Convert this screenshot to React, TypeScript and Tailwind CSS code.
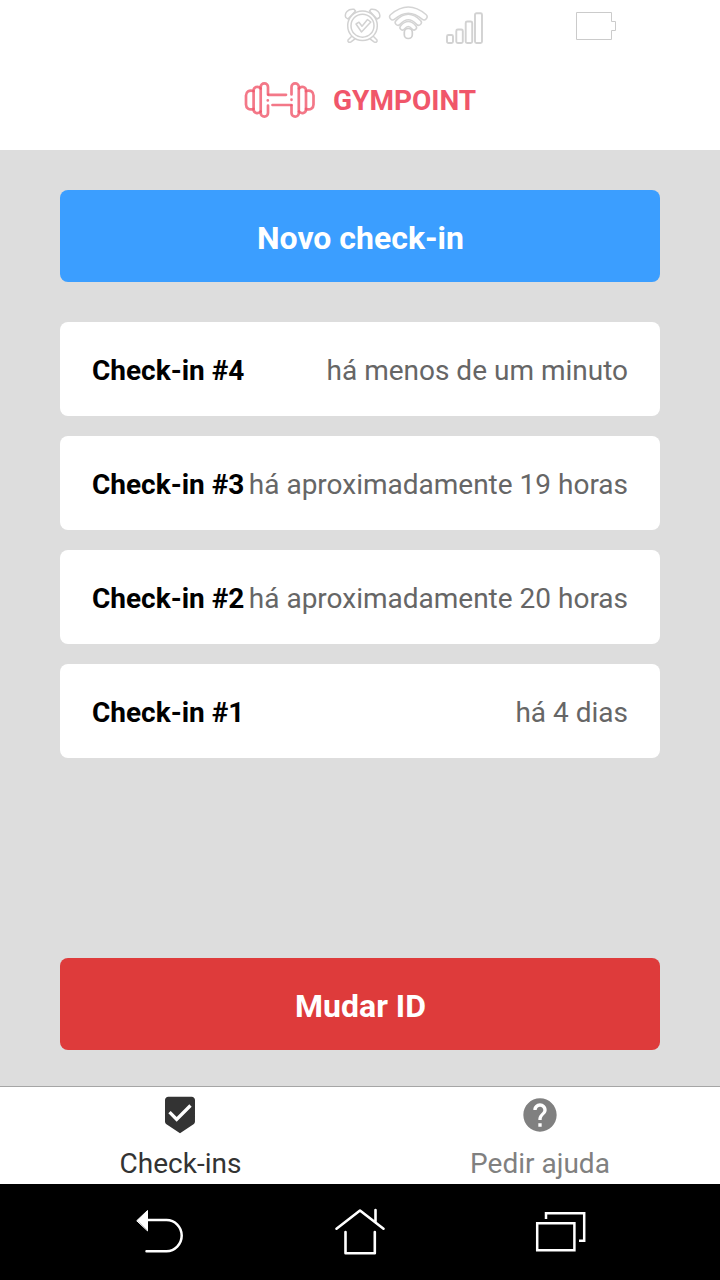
import React from 'react';
import { MdBeenhere, MdHelp } from 'react-icons/md';

const checkins = [
  { id: 4, when: 'há menos de um minuto' },
  { id: 3, when: 'há aproximadamente 19 horas' },
  { id: 2, when: 'há aproximadamente 20 horas' },
  { id: 1, when: 'há 4 dias' },
];

function AlarmIcon() {
  return (
    <svg width="37" height="37" viewBox="0 0 37 37" fill="none" stroke="#d2d2d2" strokeWidth="1.5" strokeLinecap="round" strokeLinejoin="round">
      <path d="M1.8 10.5C0 6 4 1.500 10 2.300L11.500 4 4 12zM35.500 10.500C37 6 33 1.500 27 2.300L25.500 4 33 12z" />
      <path d="M8 29l-4 4c-.5 2 1 3 3 1.800l4-3M29 29l4 4c.5 2-1 3-3 1.800l-4-3" />
      <circle cx="18.500" cy="18.700" r="14.800" fill="white" />
      <circle cx="18.500" cy="18.700" r="11.500" />
      <path d="M12 17l3-1.800 3 4 5.500-6.700 3.300 2.500-9.300 10z" />
    </svg>
  );
}

function WifiIcon() {
  return (
    <svg width="40" height="35" viewBox="0 0 40 35" fill="none" strokeLinecap="round">
      <path d="M4.700 10.800Q20.300-2.500 36 10.800" stroke="#d4d4d4" strokeWidth="7.500" />
      <path d="M4.700 10.800Q20.300-2.500 36 10.800" stroke="white" strokeWidth="4.500" />
      <path d="M10 16.500Q20.300 5.500 30.600 16.500" stroke="#d4d4d4" strokeWidth="7" />
      <path d="M10 16.500Q20.300 5.500 30.600 16.500" stroke="white" strokeWidth="4" />
      <path d="M14.500 21.500Q20.300 14.500 26 21.500" stroke="#d4d4d4" strokeWidth="6.500" />
      <path d="M14.500 21.500Q20.300 14.500 26 21.500" stroke="white" strokeWidth="3.500" />
      <rect x="16.300" y="22.500" width="8" height="10" rx="3.800" fill="white" stroke="#d0d0d0" strokeWidth="1.700" />
    </svg>
  );
}

function SignalIcon() {
  return (
    <svg width="38" height="33" viewBox="0 0 38 33" fill="none" stroke="#d2d2d2" strokeWidth="1.900">
      <rect x="1" y="23" width="6" height="8" rx="1.500" />
      <rect x="10.300" y="17.500" width="6.500" height="13.500" rx="1.500" />
      <rect x="19.700" y="9.500" width="6.500" height="21.500" rx="1.500" />
      <rect x="29" y="1.300" width="7" height="29.700" rx="1.500" />
    </svg>
  );
}

function Dumbbell() {
  return (
    <svg width="72" height="38" viewBox="0 0 72 38" fill="none" stroke="#f0566a" strokeOpacity=".8" strokeWidth="2.700" strokeLinecap="round">
      <path d="M9.500 10C5 8.500 2 11 2 14.500v9C2 27 5 29.500 9.500 28" />
      <path d="M16.600 7.500c-2.500-3-7-1.500-7 2v19c0 3.500 4.500 5 7 2" />
      <path d="M24 13.500V6a3.650 3.650 0 0 0-7.300 0v26a3.650 3.650 0 0 0 7.300 0v-7.500" />
      <path d="M24.500 13.800H42M28.500 24H47.500M23.800 19.300v.1M47.500 18.700v.1" />
      <path d="M47.500 13.500V6a3.650 3.650 0 0 1 7.300 0v26a3.650 3.650 0 0 1-7.300 0v-7.500" />
      <path d="M55 7.500c2.500-3 7-1.500 7 2v19c0 3.500-4.500 5-7 2" />
      <path d="M62 10c4.500-1.500 7.500 1 7.500 4.500v9c0 3.500-3 6-7.500 4.500" />
    </svg>
  );
}

export default function App() {
  return (
    <div className="flex h-[1280px] w-[720px] flex-col overflow-hidden bg-[#dddddd] font-['Roboto',sans-serif]">
      <div className="flex h-[50px] shrink-0 items-start bg-white pl-[344px]">
        <div className="pt-[7px]"><AlarmIcon /></div>
        <div className="pl-[7px] pt-[6px]"><WifiIcon /></div>
        <div className="pl-[18px] pt-[12px]"><SignalIcon /></div>
        <div className="pl-[92px] pt-[11px]">
          <svg width="41" height="30" viewBox="0 0 41 30" fill="none" stroke="#cbcbcb">
            <path d="M.5 1.500h35v9h4v9h-4v9H.5z" />
          </svg>
        </div>
      </div>
      <header className="flex h-[100px] shrink-0 items-center justify-start bg-white pl-[244px]">
        <Dumbbell />
        <span className="ml-[17px] pt-[2px] text-[28px] leading-[38px] font-bold text-[#f0566a]">GYMPOINT</span>
      </header>

      <main className="flex grow flex-col px-[60px] pt-[40px] pb-[36px]">
        <button className="flex h-[92px] shrink-0 items-center justify-center rounded-lg bg-[#3b9eff] pt-[4px] pl-px text-[32px] font-bold text-white">
          Novo check-in
        </button>
        <ul className="mt-[40px] flex flex-col gap-[20px]">
          {checkins.map((c) => (
            <li key={c.id} className="flex h-[94px] items-center justify-between rounded-lg bg-white px-[32px] pt-[4px] text-[28px] whitespace-nowrap">
              <strong className="font-bold text-black">Check-in #{c.id}</strong>
              <span className="text-[#666666]">{c.when}</span>
            </li>
          ))}
        </ul>
        <button className="mt-auto flex h-[92px] shrink-0 items-center justify-center rounded-lg bg-[#de3b3b] pt-[4px] pl-px text-[32px] font-bold text-white">
          Mudar ID
        </button>
      </main>

      <nav className="flex h-[98px] shrink-0 border-t border-[#a5a5a5] bg-white text-[28px]">
        <div className="flex w-1/2 flex-col items-center pt-[8px] text-[#333333]">
          <MdBeenhere size={40} />
          <span className="mt-[9px] pl-px leading-[40px]">Check-ins</span>
        </div>
        <div className="flex w-1/2 flex-col items-center pt-[8px] text-[#808080]">
          <MdHelp size={40} />
          <span className="mt-[9px] leading-[40px]">Pedir ajuda</span>
        </div>
      </nav>

      <div className="flex h-[96px] shrink-0 items-center bg-black">
        <div className="flex w-[200px] pl-[130px]">
          <svg width="60" height="60" viewBox="130 1202 60 60" fill="none" stroke="white" strokeWidth="2.500" strokeLinecap="round">
            <path d="M147 1220h19.500a15.200 15.600 0 0 1 0 31.200h-20" />
            <path d="M137 1220.500l10.500-10v20z" fill="white" stroke="white" strokeWidth="1" strokeLinejoin="round" />
          </svg>
        </div>
        <div className="flex w-[320px] justify-center">
          <svg width="60" height="60" viewBox="330 1202 60 60" fill="none" stroke="white" strokeWidth="2.600" strokeLinecap="round" strokeLinejoin="round">
            <path d="M336.500 1228.700L360 1210.500l23.500 18.200M375.500 1210v12M345.500 1232v21.200h29.300V1232" />
          </svg>
        </div>
        <div className="flex w-[200px] pl-[10px]">
          <svg width="60" height="60" viewBox="530 1202 60 60" fill="none" stroke="white" strokeWidth="2.500">
            <path d="M537.200 1223.300h37.200v26.900h-37.200zM546 1219v-5.700h38.200v27.500H579" />
          </svg>
        </div>
      </div>
    </div>
  );
}
